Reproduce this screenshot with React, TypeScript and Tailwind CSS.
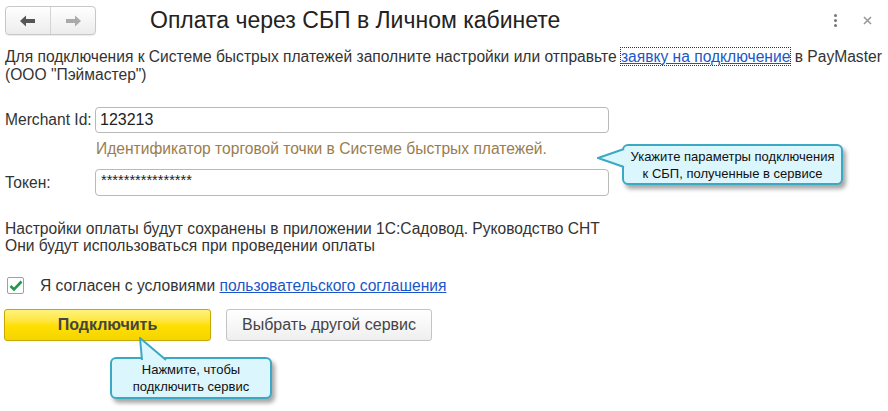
import React from "react";

function Arrow({ dir, color }: { dir: "left" | "right"; color: string }) {
  return (
    <svg width="16" height="12" viewBox="0 0 16 12" style={{ transform: dir === "right" ? "scaleX(-1)" : undefined }}>
      <path d="M0 6 L6 0.5 L6 4 L15 4 L15 8 L6 8 L6 11.5 Z" fill={color} />
    </svg>
  );
}

function Callout({ className, tail, children }: { className: string; tail: React.ReactNode; children: React.ReactNode }) {
  return (
    <div className={`absolute ${className}`}>
      {tail}
      <div className="relative h-full w-full rounded-[6px] border-2 border-[#3ba9c4] bg-[#dcf6fd] text-center text-[13px] leading-[17px] text-[#111] shadow-[3px_4px_4px_rgba(0,0,0,0.35)] flex flex-col items-center justify-center">
        {children}
      </div>
    </div>
  );
}

export default function App() {
  return (
    <div className="relative h-[411px] w-[888px] overflow-hidden bg-white font-['Liberation_Sans',Arial,sans-serif] text-[#333]">
      {/* Header */}
      <div className="flex h-[29px] items-center pl-[5px] pr-[16px] mt-[6px]">
        <div className="flex h-[29px] w-[91px] rounded-[4px] border border-[#c8c8c8] bg-gradient-to-b from-white to-[#ececec] shadow-[0_1px_1px_rgba(0,0,0,0.08)]">
          <div className="flex flex-1 items-center justify-center border-r border-[#d4d4d4]">
            <Arrow dir="left" color="#555" />
          </div>
          <div className="flex flex-1 items-center justify-center">
            <Arrow dir="right" color="#aaa" />
          </div>
        </div>
        <div className="ml-[54px] text-[23px] text-[#222]">Оплата через СБП в Личном кабинете</div>
        <div className="ml-auto flex items-center gap-[26px]">
          <div className="flex flex-col gap-[2px]">
            <span className="block h-[3px] w-[3px] rounded-full bg-[#777]" />
            <span className="block h-[3px] w-[3px] rounded-full bg-[#777]" />
            <span className="block h-[3px] w-[3px] rounded-full bg-[#777]" />
          </div>
          <svg width="9" height="9" viewBox="0 0 9 9">
            <path d="M1 1 L8 8 M8 1 L1 8" stroke="#999" strokeWidth="1.6" />
          </svg>
        </div>
      </div>

      {/* Intro */}
      <div className="mt-[13px] px-[5px] text-[15.6px] leading-[18px] whitespace-nowrap">
        Для подключения к Системе быстрых платежей заполните настройки или отправьте{" "}
        <a className="text-[#1b56c9] underline outline outline-1 outline-dotted outline-[#333]">заявку на подключение</a> в PayMaster
        <br />
        (ООО "Пэймастер")
      </div>

      {/* Form */}
      <div className="mt-[23px] px-[5px]">
        <div className="flex items-center">
          <label className="w-[90px] text-[15.6px]">Merchant Id:</label>
          <div className="flex h-[26px] w-[514px] items-center rounded-[4px] border border-[#b9b9b9] px-[4px] text-[16px] text-[#222]">
            123213
          </div>
        </div>
        <div className="mt-[7px] pl-[91px] text-[15.6px] leading-[17px] text-[#9a7d4e]">
          Идентификатор торговой точки в Системе быстрых платежей.
        </div>
        <div className="mt-[12px] flex items-center">
          <label className="w-[90px] text-[15.6px]">Токен:</label>
          <div className="flex h-[27px] w-[514px] items-start rounded-[4px] border border-[#b9b9b9] px-[5px] pt-[3px] text-[14.6px] leading-[14px] text-[#222]">
            ****************
          </div>
        </div>
      </div>

      <div className="mt-[24px] px-[5px] text-[15.6px] leading-[17px]">
        Настройки оплаты будут сохранены в приложении 1С:Садовод. Руководство СНТ
        <br />
        Они будут использоваться при проведении оплаты
      </div>

      <div className="mt-[20px] flex items-center pl-[7px]">
        <div className="flex h-[17px] w-[17px] items-center justify-center rounded-[2px] border border-[#a0a0a0] bg-white">
          <svg width="14" height="12" viewBox="0 0 14 12">
            <path d="M1.5 6 L5 9.5 L12.5 1.5" stroke="#1e9a4a" strokeWidth="2.6" fill="none" />
          </svg>
        </div>
        <span className="ml-[16px] text-[15.6px]">
          Я согласен с условиями <a className="text-[#1b56c9] underline">пользовательского соглашения</a>
        </span>
      </div>

      <div className="mt-[12px] flex items-center gap-[15px] pl-[4px]">
        <button className="h-[32px] w-[207px] rounded-[3px] border border-[#c6a800] bg-gradient-to-b from-[#fff27a] via-[#ffe100] to-[#f5d400] text-[16px] font-bold text-[#444]">
          Подключить
        </button>
        <button className="h-[32px] w-[206px] rounded-[3px] border border-[#c4c4c4] bg-gradient-to-b from-white to-[#efefef] text-[16px] text-[#444]">
          Выбрать другой сервис
        </button>
      </div>

      {/* Callouts */}
      <Callout
        className="left-[622px] top-[144px] h-[41px] w-[221px]"
        tail={
          <svg className="absolute left-[-25px] top-[4px] z-10" width="30" height="22" viewBox="0 0 30 22">
            <path d="M27 1 L1 10 L27 19" fill="#dcf6fd" stroke="#3ba9c4" strokeWidth="2" />
          </svg>
        }
      >
        <div>Укажите параметры подключения</div>
        <div>к СБП, полученные в сервисе</div>
      </Callout>

      <Callout
        className="left-[110px] top-[357px] h-[42px] w-[162px]"
        tail={
          <svg className="absolute left-[26px] top-[-20px] z-10" width="32" height="24" viewBox="0 0 32 24">
            <path d="M6 23 L4 1 L30 23" fill="#dcf6fd" stroke="#3ba9c4" strokeWidth="2" />
          </svg>
        }
      >
        <div>Нажмите, чтобы</div>
        <div>подключить сервис</div>
      </Callout>
    </div>
  );
}
